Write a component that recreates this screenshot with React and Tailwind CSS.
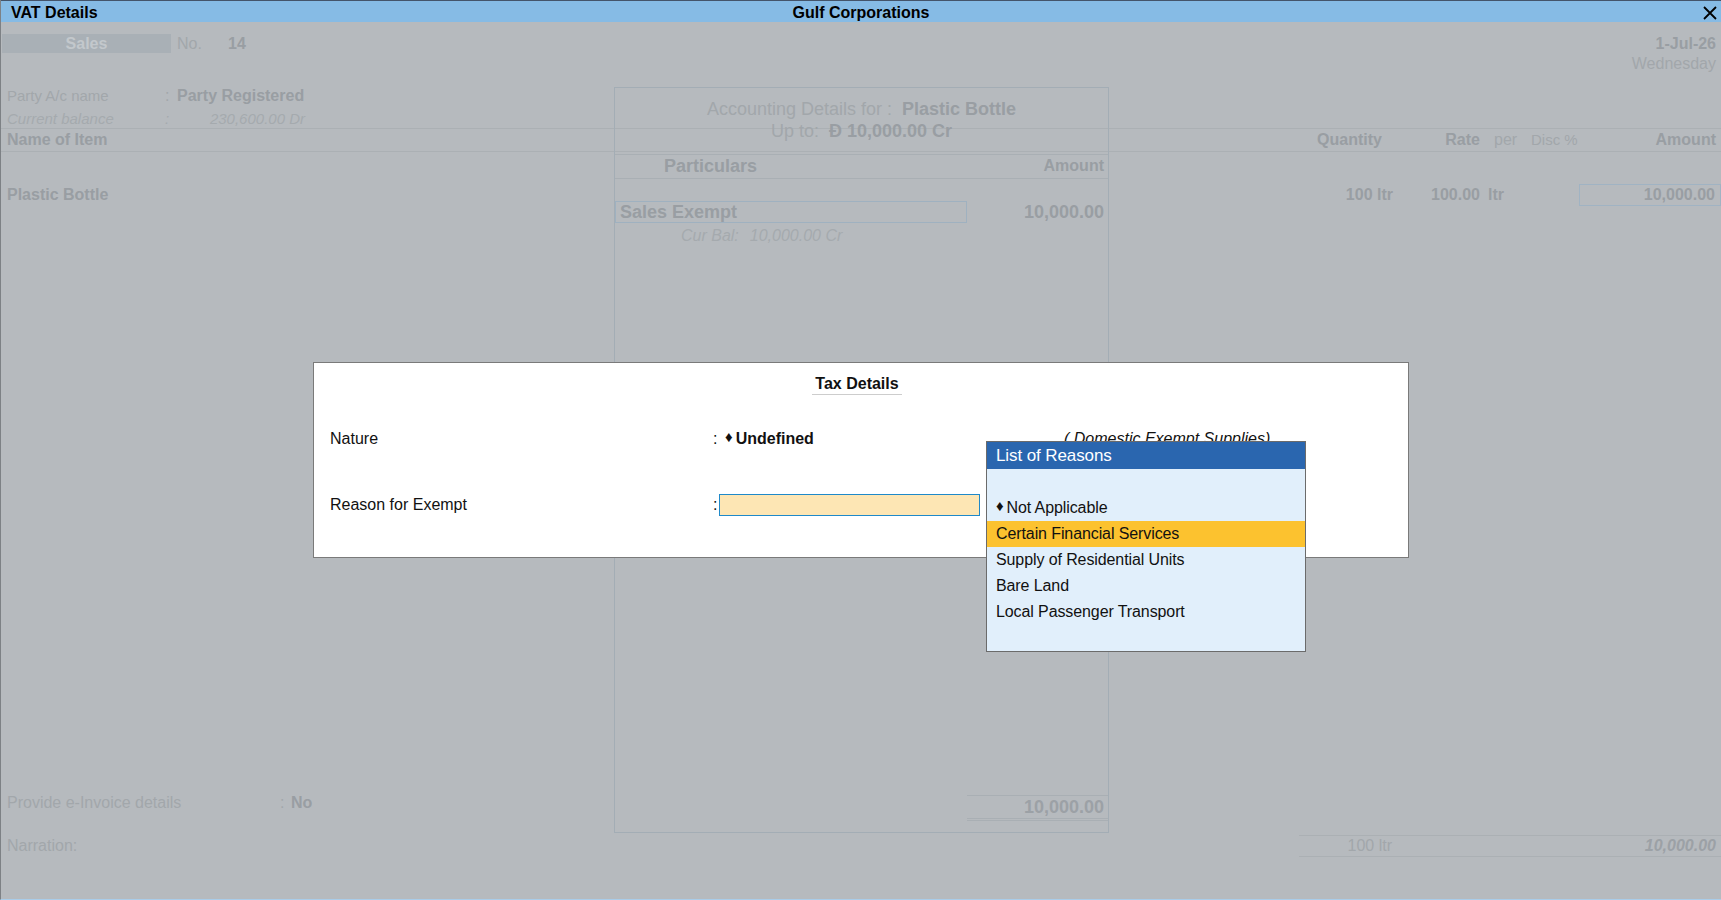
import React from "react";

const reasons = [
  { label: "Not Applicable", marked: true },
  { label: "Certain Financial Services", active: true },
  { label: "Supply of Residential Units" },
  { label: "Bare Land" },
  { label: "Local Passenger Transport" },
];

const CloseIcon = () => (
  <svg width="14" height="14" viewBox="0 0 14 14" fill="none" stroke="#000" strokeWidth="1.8">
    <path d="M1 1L13 13M13 1L1 13" />
  </svg>
);

const Diamond = () => (
  <span className="text-[15px] leading-none relative -top-[3px] mr-[3px]">♦</span>
);

const AccountingPanel = () => {
  return (
    <div className="absolute left-[613px] top-[87px] w-[495px] h-[746px] border border-[#a3adb5] flex flex-col">
      <div className="pt-[10px] text-center text-[18px] leading-[22px] text-[#a2a7ab]">
        <div>
          Accounting Details for :&nbsp;{" "}
          <span className="font-bold text-[#999ea3]">Plastic Bottle</span>
        </div>
        <div>
          Up to:&nbsp;{" "}
          <span className="font-bold text-[#999ea3]">Ð 10,000.00 Cr</span>
        </div>
      </div>

      {/* Particulars header */}
      <div className="mt-[12px] h-[25px] border-y border-[#a9afb4] flex items-center justify-between font-bold text-[#999ea3]">
        <span className="pl-[49px] text-[18px]">Particulars</span>
        <span className="pr-[4px] text-[16px] -mt-[2px]">Amount</span>
      </div>

      <div className="mt-[22px] h-[22px] flex items-center">
        <div className="w-[352px] h-[22px] border border-[#9fb1c0] flex items-center pl-[4px] text-[18px] font-bold text-[#999ea3]">
          Sales Exempt
        </div>
        <span className="ml-auto pr-[4px] text-[18px] font-bold text-[#999ea3]">10,000.00</span>
      </div>
      <div className="mt-[2px] h-[22px] flex items-center pl-[66px] italic text-[16px] text-[#a5aaae]">
        <span>Cur Bal:</span>
        <span className="ml-[11px]">10,000.00 Cr</span>
      </div>

      <div className="flex-1" />

      <div className="ml-auto w-[141px] mb-[11px] border-t border-[#a9afb4]">
        <div className="h-[22px] flex items-center justify-end pr-[4px] text-[18px] font-bold text-[#9ca1a6]">
          10,000.00
        </div>
        <div className="h-[3px] border-y border-[#a9afb4]" />
      </div>
    </div>
  );
};

const TaxDetails = () => {
  return (
    <div className="absolute left-[312px] top-[362px] w-[1096px] h-[196px] bg-white border border-[#7a7a7a] text-[16px] text-[#111]">
      <div className="pt-[9px] text-center pr-[8px]">
        <span className="inline-block px-[3px] font-bold leading-[21px] border-b border-[#cdcdcd]">
          Tax Details
        </span>
      </div>

      <div className="mt-[32px] h-[22px] flex items-center">
        <span className="w-[399px] pl-[16px]">Nature</span>
        <span className="w-[6px]">:</span>
        <div className="w-[345px] pl-[6px] flex items-center">
          <Diamond />
          <span className="font-bold">Undefined</span>
        </div>
        <span className="italic">( Domestic Exempt Supplies)</span>
      </div>

      <div className="mt-[44px] h-[22px] flex items-center">
        <span className="w-[399px] pl-[16px]">Reason for Exempt</span>
        <span className="w-[6px]">:</span>
        <div className="w-[261px] h-[22px] bg-[#fde6b4] border border-[#1f89c9]" />
      </div>
    </div>
  );
};

const ReasonList = () => {
  return (
    <div className="absolute left-[985px] top-[441px] w-[320px] border border-[#6b6b6b] bg-[#e1effb] text-[16px] tracking-[-0.1px] text-[#111]">
      <div className="h-[27px] bg-[#2a66af] text-white text-[17px] flex items-center pl-[9px]">
        List of Reasons
      </div>
      <div className="h-[26px]" />
      {reasons.map((r) => (
        <div
          key={r.label}
          className={`h-[26px] flex items-center pl-[9px] ${r.active ? "bg-[#fcc22f]" : ""}`}
        >
          {r.marked && <Diamond />}
          {r.label}
        </div>
      ))}
      <div className="h-[26px]" />
    </div>
  );
};

export default function App() {
  return (
    <div className="relative w-[1721px] h-[900px] overflow-hidden flex flex-col bg-[#b6babe] border-l border-[#7d8185] border-b border-b-[#a9cdea] font-['Liberation_Sans',Arial,sans-serif] text-[16px]">
      {/* Title bar */}
      <div className="h-[22px] shrink-0 border-t border-[#44546a] bg-[#86bbe5] grid grid-cols-[1fr_auto_1fr] items-center font-bold text-black">
        <span className="pl-[10px]">VAT Details</span>
        <span>Gulf Corporations</span>
        <div className="flex justify-end pr-[4px]">
          <CloseIcon />
        </div>
      </div>

      {/* Voucher body (dimmed) */}
      <div className="flex-1 flex flex-col pr-[5px] text-[#a2a7ab]">
        <div className="mt-[12px] h-[19px] flex items-center">
          <div className="ml-[1px] w-[169px] h-[19px] bg-[#a9b0b6] text-[#c3c8cc] font-bold text-center leading-[19px]">
            Sales
          </div>
          <span className="ml-[6px] w-[51px]">No.</span>
          <span className="font-bold text-[#999ea3]">14</span>
          <span className="ml-auto font-bold text-[#999ea3]">1-Jul-26</span>
        </div>
        <div className="h-[22px] flex items-center justify-end">Wednesday</div>

        <div className="mt-[10px] h-[22px] flex items-center">
          <span className="w-[164px] pl-[6px] text-[15px]">Party A/c name</span>
          <span className="w-[12px]">:</span>
          <span className="font-bold text-[#999ea3]">Party Registered</span>
        </div>
        <div className="h-[21px] pt-[3px] flex items-center italic text-[15px] text-[#a5aaae]">
          <span className="w-[164px] pl-[6px]">Current balance</span>
          <span className="w-[12px]">:</span>
          <span className="w-[128px] text-right">230,600.00 Dr</span>
        </div>

        {/* Item table header */}
        <div className="h-[24px] border-y border-[#abb0b4] -mr-[5px] pr-[5px] flex items-center font-bold text-[#999ea3]">
          <span className="flex-1 pl-[6px]">Name of Item</span>
          <span className="w-[94px] text-right pr-[12px]">Quantity</span>
          <span className="w-[94px] text-right pr-[8px]">Rate</span>
          <span className="w-[43px] pl-[6px] font-normal text-[#a2a7ab]">per</span>
          <span className="w-[48px] whitespace-nowrap font-normal text-[15px] text-[#a2a7ab]">Disc %</span>
          <span className="w-[137px] text-right">Amount</span>
        </div>

        <div className="mt-[32px] h-[22px] flex items-center font-bold text-[#999ea3]">
          <span className="flex-1 pl-[6px]">Plastic Bottle</span>
          <span className="w-[94px] text-right pr-[1px]">100 ltr</span>
          <span className="w-[94px] text-right pr-[8px]">100.00</span>
          <span className="w-[43px]">ltr</span>
          <span className="w-[48px]" />
          <div className="w-[142px] -mr-[5px] h-[22px] border border-[#a0b3c3] flex items-center justify-end pr-[5px]">
            10,000.00
          </div>
        </div>

        <div className="flex-1" />

        <div className="h-[22px] flex items-center">
          <span className="w-[279px] pl-[6px]">Provide e-Invoice details</span>
          <span className="w-[11px]">:</span>
          <span className="font-bold text-[#999ea3]">No</span>
        </div>

        <div className="mt-[21px] h-[22px] flex items-center">
          <span className="flex-1 pl-[6px]">Narration:</span>
          <div className="w-[422px] -mr-[5px] h-[22px] border-y border-[#abb0b4] flex items-center pr-[5px]">
            <span className="w-[93px] text-right">100 ltr</span>
            <span className="ml-auto italic font-bold text-[#9ca1a6]">10,000.00</span>
          </div>
        </div>
        <div className="h-[42px]" />
      </div>

      <AccountingPanel />
      <TaxDetails />
      <ReasonList />
    </div>
  );
}
